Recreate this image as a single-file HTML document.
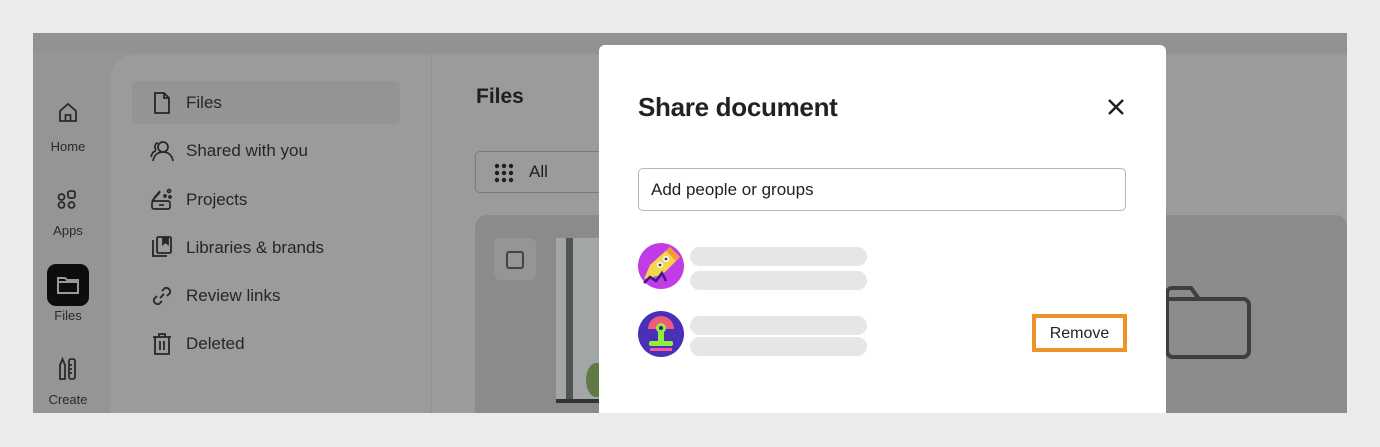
<!DOCTYPE html>
<html><head><meta charset="utf-8">
<style>
*{box-sizing:border-box;margin:0;padding:0}
body{width:1380px;height:447px;background:#ebebeb;position:relative;overflow:hidden;font-family:"Liberation Sans",sans-serif;color:#1e1e1e}
.app{position:absolute;left:33px;top:33px;width:1314px;height:380px;background:#959595;overflow:hidden}
.topstrip{position:absolute;left:0;top:0;width:1314px;height:20px;background:#929292}
.panel{position:absolute;left:77px;top:22px;width:1240px;height:380px;background:#9b9b9b;border-radius:24px 0 0 0}
.divider{position:absolute;left:398px;top:22px;width:1px;height:360px;background:#939393}
.rail .it{position:absolute;left:0;width:70px;text-align:center;font-size:13px;color:#2a2a2a}
.nav{position:absolute;font-size:17px;color:#262626}
.sel{position:absolute;left:99px;top:48px;width:268px;height:43px;background:#949494;border-radius:6px}
.modal{position:absolute;left:599px;top:45px;width:567px;height:368px;background:#fff;border-radius:6px 6px 0 0}
.bar{position:absolute;height:19px;border-radius:10px;background:#e6e6e6}
</style></head><body>
<div class="app">
 <div class="topstrip"></div>
 <div class="panel"></div>
 <div class="divider"></div>
 <div class="sel"></div>
 <svg style="position:absolute;left:24px;top:69px" width="22" height="22" viewBox="0 0 22 22" fill="none" stroke="#2a2a2a" stroke-width="1.8"><path d="M3 9 L11 2 L19 9 V19 H3 Z"/><path d="M8.5 19 V13 H13.5 V19"/></svg>
 <div class="rail"><div class="it" style="top:106px;left:0">Home</div></div>
 <svg style="position:absolute;left:23px;top:156px" width="22" height="22" viewBox="0 0 22 22" fill="none" stroke="#2a2a2a" stroke-width="1.8"><circle cx="5.5" cy="8" r="3"/><rect x="12" y="2" width="7" height="7" rx="2"/><circle cx="5.5" cy="16" r="3"/><circle cx="15.5" cy="16" r="3"/></svg>
 <div class="rail"><div class="it" style="top:190px">Apps</div></div>
 <div style="position:absolute;left:14px;top:231px;width:42px;height:42px;background:#0d0d0d;border-radius:9px"></div>
 <svg style="position:absolute;left:23px;top:241px" width="24" height="22" viewBox="0 0 24 22" fill="none" stroke="#999" stroke-width="2"><path d="M2 4 H9 L11 6 H22 V19 H2 Z"/><path d="M2 8 H22"/></svg>
 <div class="rail"><div class="it" style="top:275px">Files</div></div>
 <svg style="position:absolute;left:24px;top:324px" width="22" height="24" viewBox="0 0 22 24" fill="none" stroke="#2a2a2a" stroke-width="1.8"><path d="M3 8 L5.5 2 L8 8 V22 H3 Z"/><rect x="12" y="2" width="6" height="20" rx="2"/><path d="M12 8 H15 M12 12 H15 M12 16 H15"/></svg>
 <div class="rail"><div class="it" style="top:359px">Create</div></div>

 <svg style="position:absolute;left:118px;top:58px" width="22" height="24" viewBox="0 0 22 24" fill="none" stroke="#262626" stroke-width="1.8"><path d="M4 2 H13 L18 7 V22 H4 Z"/><path d="M13 2 V7 H18"/></svg>
 <div class="nav" style="left:153px;top:60px">Files</div>
 <svg style="position:absolute;left:116px;top:106px" width="26" height="24" viewBox="0 0 26 24" fill="none" stroke="#262626" stroke-width="1.7"><circle cx="14" cy="8" r="5"/><path d="M4 22 C5 15 10 13 14 13 C18 13 23 15 24 22"/><path d="M9 4 C6 4 5 8 7 11 M2 18 C3 14 5 12 7 12"/></svg>
 <div class="nav" style="left:153px;top:108px">Shared with you</div>
 <svg style="position:absolute;left:116px;top:154px" width="26" height="26" viewBox="0 0 26 26" fill="none" stroke="#262626" stroke-width="1.7"><path d="M3 14 L11 5 M5 11 L11 4"/><rect x="3" y="14" width="18" height="8" rx="2"/><path d="M10 18 H15"/><circle cx="20" cy="4" r="1.5"/><circle cx="16" cy="9" r="1"/><circle cx="21" cy="10" r="1"/></svg>
 <div class="nav" style="left:153px;top:157px">Projects</div>
 <svg style="position:absolute;left:117px;top:202px" width="24" height="24" viewBox="0 0 24 24" fill="none" stroke="#262626" stroke-width="1.8"><path d="M3 5 V21 H17"/><rect x="7" y="2" width="14" height="16" rx="1.5"/><path d="M13 2 V9 L15.5 7 L18 9 V2" fill="#262626"/></svg>
 <div class="nav" style="left:153px;top:205px">Libraries &amp; brands</div>
 <svg style="position:absolute;left:116px;top:250px" width="26" height="26" viewBox="0 0 26 26" fill="none" stroke="#262626" stroke-width="1.8"><path d="M11 15 L15 11"/><path d="M13 8 L16 5 A4 4 0 0 1 21 10 L18 13"/><path d="M13 18 L10 21 A4 4 0 0 1 5 16 L8 13"/></svg>
 <div class="nav" style="left:153px;top:253px">Review links</div>
 <svg style="position:absolute;left:117px;top:298px" width="24" height="26" viewBox="0 0 24 26" fill="none" stroke="#262626" stroke-width="1.8"><path d="M3 6 H21 M9 6 V3 H15 V6"/><path d="M5 6 V23 H19 V6"/><path d="M10 10 V19 M14 10 V19"/></svg>
 <div class="nav" style="left:153px;top:301px">Deleted</div>

 <div style="position:absolute;left:443px;top:52px;font-size:21px;font-weight:bold;color:#1e1e1e">Files</div>
 <div style="position:absolute;left:442px;top:118px;width:140px;height:42px;border:1px solid #7a7a7a;border-radius:5px;background:#9b9b9b"></div>
 <svg style="position:absolute;left:461px;top:130px" width="22" height="20" viewBox="0 0 22 20" fill="#1e1e1e"><circle cx="3" cy="3" r="2.2"/><circle cx="10" cy="3" r="2.2"/><circle cx="17" cy="3" r="2.2"/><circle cx="3" cy="10" r="2.2"/><circle cx="10" cy="10" r="2.2"/><circle cx="17" cy="10" r="2.2"/><circle cx="3" cy="17" r="2.2"/><circle cx="10" cy="17" r="2.2"/><circle cx="17" cy="17" r="2.2"/></svg>
 <div style="position:absolute;left:496px;top:129px;font-size:17px">All</div>
 <div style="position:absolute;left:442px;top:182px;width:872px;height:210px;background:#8b8b8b;border-radius:12px 12px 0 0"></div>
 <div style="position:absolute;left:461px;top:205px;width:42px;height:42px;background:#959595;border-radius:6px"></div>
 <div style="position:absolute;left:473px;top:218px;width:18px;height:18px;border:2px solid #444;border-radius:3px"></div>
 <div style="position:absolute;left:523px;top:205px;width:50px;height:165px;background:#a3a6a6"></div>
 <div style="position:absolute;left:533px;top:205px;width:7px;height:165px;background:#4f5555"></div>
 <div style="position:absolute;left:523px;top:366px;width:50px;height:4px;background:#333"></div>
 <div style="position:absolute;left:553px;top:330px;width:20px;height:34px;background:#5f7a45;border-radius:50% 0 0 50%"></div>
 <svg style="position:absolute;left:1130px;top:252px" width="90" height="76" viewBox="0 0 90 76" fill="none" stroke="#3e3e3e" stroke-width="4"><path d="M4 8 A5 5 0 0 1 9 3 H28 L36 14 H80 A6 6 0 0 1 86 20 V66 A6 6 0 0 1 80 72 H10 A6 6 0 0 1 4 66 Z"/><path d="M4 14 H36"/></svg>
</div>

<div class="modal">
 <div style="position:absolute;left:39px;top:47px;font-size:26px;font-weight:bold;color:#222;letter-spacing:-0.3px">Share document</div>
 <svg style="position:absolute;left:508px;top:53px" width="18" height="18" viewBox="0 0 18 18" stroke="#222" stroke-width="2.5"><path d="M2 2 L16 16 M16 2 L2 16"/></svg>
 <div style="position:absolute;left:39px;top:123px;width:488px;height:43px;border:1.5px solid #b5b5b5;border-radius:5px"></div>
 <div style="position:absolute;left:52px;top:135px;font-size:17px;color:#222">Add people or groups</div>
 <svg style="position:absolute;left:39px;top:198px" width="46" height="46" viewBox="0 0 46 46"><circle cx="23" cy="23" r="23" fill="#c23ce6"/><path d="M6 36 L12 22 L32 4 L42 14 L24 32 Z" fill="#f3d64a"/><path d="M32 4 L42 14 L38 18 L28 8 Z" fill="#f29a3a"/><circle cx="22" cy="22" r="3" fill="#fff"/><circle cx="28" cy="16" r="3" fill="#fff"/><circle cx="22" cy="22" r="1.4" fill="#3b2a8c"/><circle cx="28" cy="16" r="1.4" fill="#3b2a8c"/><path d="M6 40 L12 34 L18 38 L24 30 L28 38" fill="none" stroke="#3b1a8c" stroke-width="2.5"/></svg>
 <div class="bar" style="left:91px;top:202px;width:177px"></div>
 <div class="bar" style="left:91px;top:226px;width:177px"></div>
 <svg style="position:absolute;left:39px;top:266px" width="46" height="46" viewBox="0 0 46 46"><circle cx="23" cy="23" r="23" fill="#4a2fb8"/><path d="M10 18 A13 13 0 0 1 36 18 Z" fill="#f25a7a"/><circle cx="23" cy="17" r="5" fill="#8ef23a"/><circle cx="23" cy="17" r="2" fill="#3b1a8c"/><rect x="20" y="21" width="6" height="10" fill="#8ef23a"/><rect x="11" y="30" width="24" height="5" rx="2" fill="#8ef23a"/><rect x="12" y="37" width="22" height="3" fill="#f25a9a"/></svg>
 <div class="bar" style="left:91px;top:271px;width:177px"></div>
 <div class="bar" style="left:91px;top:292px;width:177px"></div>
 <div style="position:absolute;left:433px;top:269px;width:95px;height:38px;border:4px solid #f0922a"></div>
 <div style="position:absolute;left:433px;top:280px;width:95px;text-align:center;font-size:16px;color:#222">Remove</div>
</div>
</body></html>
